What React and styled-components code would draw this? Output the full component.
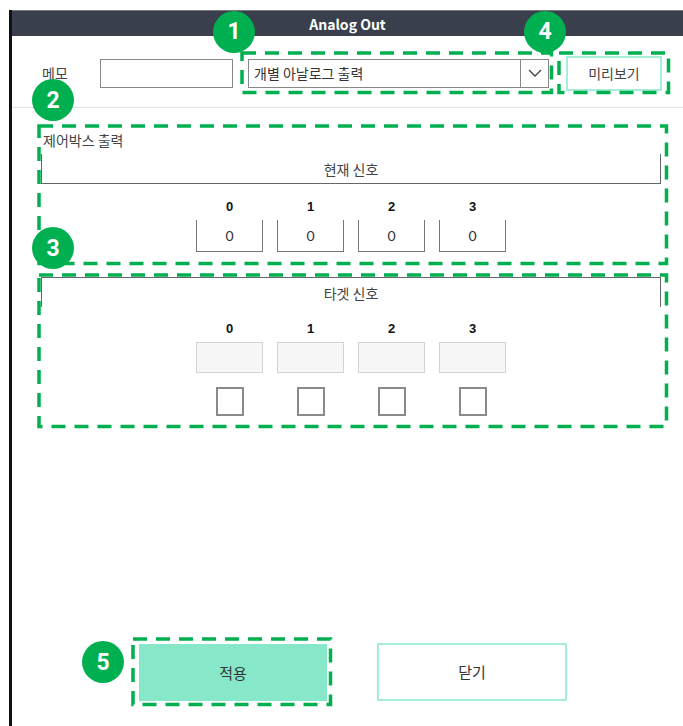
import styled, { createGlobalStyle } from "styled-components";

const GlobalStyle = createGlobalStyle`
    html, body {
        margin: 0;
        padding: 0;
        background: #fff;
    }
    body {
        font-family: "Noto Sans CJK KR", "Noto Sans", sans-serif;
        color: #333;
    }
`;

const GREEN = "#00b050";

const Frame = styled.div`
    margin: 10px 0 0 9px;
    height: 716px;
    border-left: 3px solid #111;
    display: flex;
    flex-direction: column;
`;

const TitleBar = styled.div`
    height: 26px;
    background: #3a3f4d;
    border-top: 1px solid #777;
    box-sizing: border-box;
    display: flex;
    align-items: center;
    justify-content: center;
    color: #fff;
    font-weight: bold;
    font-size: 14px;
`;

const TopRow = styled.div`
    height: 72px;
    padding-top: 3px;
    display: flex;
    align-items: center;
    border-bottom: 1px solid #e2e2e2;
    box-sizing: border-box;
`;

const MemoLabel = styled.span`
    margin-left: 30px;
    width: 58px;
    font-size: 14px;
    color: #444;
`;

const MemoInput = styled.div`
    width: 133px;
    height: 29px;
    border: 1px solid #888;
    box-sizing: border-box;
`;

const Framed = styled.div`
    position: relative;
    box-sizing: border-box;
    flex: none;
`;

const DashSvg = styled.svg`
    position: absolute;
    top: 1.75px;
    left: 1.75px;
    width: calc(100% - 3.5px);
    height: calc(100% - 3.5px);
    overflow: visible;
    pointer-events: none;
    z-index: 1;
`;

const Badge = styled.div`
    position: absolute;
    width: 42px;
    height: 42px;
    border-radius: 50%;
    background: ${GREEN};
    color: #fff;
    font-family: Roboto, "Liberation Sans", sans-serif;
    font-weight: bold;
    font-size: 23px;
    display: flex;
    align-items: center;
    justify-content: center;
    z-index: 2;
`;

function Dashed({ children, badge, badgeTop, badgeLeft, ...rest }) {
    return (
        <Framed {...rest}>
            <DashSvg>
                <rect
                    x="0"
                    y="0"
                    width="100%"
                    height="100%"
                    fill="none"
                    stroke={GREEN}
                    strokeWidth="3.5"
                    strokeDasharray="14 9"
                />
            </DashSvg>
            {badge && (
                <Badge style={{ top: badgeTop, left: badgeLeft }}>{badge}</Badge>
            )}
            {children}
        </Framed>
    );
}

const SelectFrame = styled(Dashed)`
    margin-left: 7px;
    width: 313px;
    height: 43px;
    padding: 7px 4px 7px 8px;
`;

const Select = styled.div`
    height: 29px;
    border: 1px solid #888;
    box-sizing: border-box;
    display: flex;
    align-items: center;
    font-size: 14px;
    color: #333;
`;

const SelectText = styled.span`
    flex: 1;
    padding-left: 5px;
`;

const SelectArrow = styled.div`
    width: 27px;
    height: 100%;
    border-left: 1px solid #888;
    display: flex;
    align-items: center;
    justify-content: center;
`;

const PreviewFrame = styled(Dashed)`
    margin-left: 4px;
    width: 113px;
    height: 43px;
    padding: 4px 0 0 9px;
`;

const PreviewButton = styled.div`
    width: 96px;
    height: 35px;
    border: 2px solid #a6eed8;
    box-sizing: border-box;
    display: flex;
    align-items: center;
    justify-content: center;
    font-size: 14px;
    color: #444;
`;

const Section = styled(Dashed)`
    margin: ${({ $top }) => $top}px 15px 0 25px;
    height: ${({ $h }) => $h}px;
    padding: ${({ $pad }) => $pad}px 7px 0 4px;
`;

const SectionTitle = styled.div`
    font-size: 14px;
    color: #444;
    padding-left: 2px;
    height: 27px;
    line-height: 26px;
`;

const SignalHeader = styled.div`
    height: 30px;
    box-sizing: border-box;
    border: 1px solid #666;
    border-${({ $open }) => $open}: none;
    display: flex;
    align-items: center;
    justify-content: center;
    font-size: 14px;
    color: #444;
`;

const Grid = styled.div`
    display: grid;
    grid-template-columns: repeat(4, 67px);
    column-gap: 14px;
    justify-content: center;
    justify-items: center;
    margin-top: ${({ $top }) => $top}px;
`;

const ChannelLabel = styled.div`
    font-family: "Liberation Sans", sans-serif;
    font-weight: bold;
    font-size: 13px;
    color: #111;
    height: 14px;
    line-height: 14px;
`;

const ValueBox = styled.div`
    width: 67px;
    height: 32px;
    box-sizing: border-box;
    border: 1px solid #777;
    border-top: none;
    display: flex;
    align-items: center;
    justify-content: center;
    font-family: Lato, "Open Sans", sans-serif;
    font-size: 14px;
    color: #333;
`;

const TargetBox = styled.div`
    width: 67px;
    height: 31px;
    box-sizing: border-box;
    background: #f7f7f7;
    border: 1px solid #d4d4d4;
`;

const CheckBox = styled.div`
    width: 28px;
    height: 29px;
    box-sizing: border-box;
    border: 2px solid #8a8a8a;
`;

const Spacer = styled.div`
    flex: 1;
`;

const Buttons = styled.div`
    display: flex;
    align-items: center;
    margin: 0 0 20px 119px;
`;

const ApplyFrame = styled(Dashed)`
    width: 201px;
    height: 69px;
    padding: 7px 0 0 8px;
`;

const ApplyButton = styled.div`
    width: 188px;
    height: 57px;
    background: #86e8c9;
    display: flex;
    align-items: center;
    justify-content: center;
    font-size: 15px;
    color: #333;
`;

const CloseButton = styled.div`
    margin-left: 45px;
    width: 190px;
    height: 58px;
    box-sizing: border-box;
    border: 2px solid #a6eed8;
    display: flex;
    align-items: center;
    justify-content: center;
    font-size: 15px;
    color: #333;
`;

const channels = [0, 1, 2, 3];

export default function App() {
    return (
        <>
            <GlobalStyle />
            <Frame>
                <TitleBar>Analog Out</TitleBar>
                <TopRow>
                    <MemoLabel>메모</MemoLabel>
                    <MemoInput />
                    <SelectFrame badge="1" badgeTop={-41} badgeLeft={-27}>
                        <Select>
                            <SelectText>개별 아날로그 출력</SelectText>
                            <SelectArrow>
                                <svg width="14" height="8" viewBox="0 0 14 8">
                                    <path d="M1 1 L7 7 L13 1" fill="none" stroke="#444" strokeWidth="1.4" />
                                </svg>
                            </SelectArrow>
                        </Select>
                    </SelectFrame>
                    <PreviewFrame badge="4" badgeTop={-41} badgeLeft={-33}>
                        <PreviewButton>미리보기</PreviewButton>
                    </PreviewFrame>
                </TopRow>

                <Section $top={16} $h={141} $pad={3} badge="2" badgeTop={-45} badgeLeft={-5}>
                    <SectionTitle>제어박스 출력</SectionTitle>
                    <SignalHeader $open="top">현재 신호</SignalHeader>
                    <Grid $top={16}>
                        {channels.map((c) => (
                            <ChannelLabel key={c}>{c}</ChannelLabel>
                        ))}
                    </Grid>
                    <Grid $top={6}>
                        {channels.map((c) => (
                            <ValueBox key={c}>0</ValueBox>
                        ))}
                    </Grid>
                </Section>

                <Section $top={8} $h={155} $pad={4} badge="3" badgeTop={-46} badgeLeft={-5}>
                    <SignalHeader $open="bottom">타겟 신호</SignalHeader>
                    <Grid $top={15}>
                        {channels.map((c) => (
                            <ChannelLabel key={c}>{c}</ChannelLabel>
                        ))}
                    </Grid>
                    <Grid $top={6}>
                        {channels.map((c) => (
                            <TargetBox key={c} />
                        ))}
                    </Grid>
                    <Grid $top={14}>
                        {channels.map((c) => (
                            <CheckBox key={c} />
                        ))}
                    </Grid>
                </Section>

                <Spacer />
                <Buttons>
                    <ApplyFrame badge="5" badgeTop={4} badgeLeft={-49}>
                        <ApplyButton>적용</ApplyButton>
                    </ApplyFrame>
                    <CloseButton>닫기</CloseButton>
                </Buttons>
            </Frame>
        </>
    );
}
